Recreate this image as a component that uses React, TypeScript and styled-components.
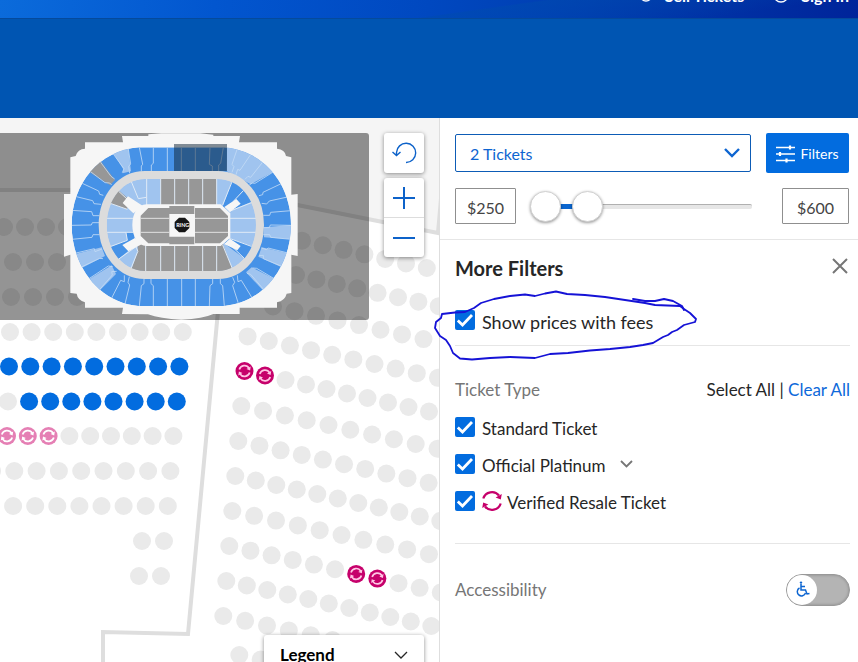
import React, { useState } from "react";
import styled, { createGlobalStyle } from "styled-components";

const GlobalStyle = createGlobalStyle`
  *, *::before, *::after { box-sizing: border-box; }
  body { margin: 0; background: #fff; color: #262626; font-family: Lato, "Open Sans", sans-serif; font-size: 17px; line-height: 20px; }
  button, input, select { font: inherit; color: inherit; }
`;

const Page = styled.div`
  display: flex;
  flex-direction: column;
  height: 100vh;
  overflow: hidden;
`;

const TopBar = styled.header`
  display: flex;
  flex: none;
  justify-content: flex-end;
  gap: 29px;
  height: 19px;
  padding-right: 9px;
  overflow: hidden;
  border-bottom: 1px solid #054a9c;
  background:
    linear-gradient(172deg, transparent 55%, rgba(0, 75, 175, 0.55) 56%, transparent 85%),
    linear-gradient(97deg, #0b6bdb 0%, #0256cf 25%, #0048c0 50%, #003cae 70%, #00249a 100%);
`;

const TopLink = styled.a`
  display: flex;
  align-items: center;
  gap: 12px;
  height: 20px;
  margin-top: -14px;
  color: #fff;
  font-size: 16px;
  font-weight: 700;
  text-decoration: none;
`;

const Banner = styled.div`
  flex: none;
  height: 99px;
  background: #0055b2;
`;

const Main = styled.main`
  display: grid;
  flex: 1;
  grid-template-columns: minmax(0, 1fr) 419px;
  min-height: 0;
`;

const MapArea = styled.section`
  position: relative;
  overflow: hidden;
`;

const MapDrawing = styled.svg`
  display: block;
`;

const MapControls = styled.div`
  position: absolute;
  top: 15px;
  right: 15px;
  display: flex;
  flex-direction: column;
  gap: 5px;
  width: 40px;
`;

const ControlGroup = styled.div`
  overflow: hidden;
  border-radius: 3px;
  background: #fff;
  box-shadow: 0 1px 4px rgba(0, 0, 0, 0.45);
`;

const ControlButton = styled.button<{ $height?: number }>`
  display: grid;
  place-items: center;
  width: 100%;
  height: ${(p) => p.$height ?? 40}px;
  padding: 0;
  border: 0;
  background: none;
  color: #0d62c9;
  cursor: pointer;

  & + & { border-top: 1px solid #ddd; }
`;

const Legend = styled.button`
  position: absolute;
  right: 15px;
  bottom: -13px;
  display: flex;
  align-items: center;
  justify-content: space-between;
  width: 160px;
  height: 40px;
  padding: 0 16px;
  border: 0;
  border-radius: 3px;
  background: #fff;
  box-shadow: 0 1px 4px rgba(0, 0, 0, 0.45);
  color: #000;
  font-weight: 700;
`;

const Panel = styled.aside`
  border-left: 1px solid #dedede;
  background: #fff;
`;

const FilterBar = styled.div`
  display: grid;
  gap: 15px;
  padding: 15px 9px 15px 15px;
  border-bottom: 1px solid #e6e6e6;
`;

const Row = styled.div<{ $gap: number }>`
  display: flex;
  align-items: center;
  gap: ${(p) => p.$gap}px;
`;

const SelectBox = styled.div`
  position: relative;
  flex: 1;
  color: #0d65d1;

  svg {
    position: absolute;
    top: 14px;
    right: 11px;
    pointer-events: none;
  }
`;

const TicketSelect = styled.select`
  display: block;
  width: 100%;
  height: 38px;
  padding: 2px 14px 0;
  border: 1px solid #0d5cb6;
  border-radius: 2px;
  background: #fff;
  font-size: 16px;
  appearance: none;
`;

const FiltersButton = styled.button`
  display: flex;
  align-items: center;
  justify-content: center;
  gap: 5px;
  width: 83px;
  height: 40px;
  padding: 2px 0 0;
  border: 0;
  border-radius: 2px;
  background: #026cdf;
  color: #fff;
  font-size: 14px;
`;

const PriceInput = styled.input<{ $width: number }>`
  width: ${(p) => p.$width}px;
  height: 36px;
  padding: 2px 0 0;
  border: 1px solid #8f8f8f;
  border-radius: 1px;
  color: #444;
  font-size: 16px;
  text-align: center;
`;

const Slider = styled.div`
  position: relative;
  flex: 1;
  height: 36px;
  margin-right: 16px;
`;

const SliderTrack = styled.div`
  position: absolute;
  top: 16px;
  right: 0;
  left: 0;
  height: 5px;
  border-top: 1px solid #b0b0b0;
  border-radius: 2px;
  background: #e6e6e6;
`;

const SliderFill = styled.div`
  position: absolute;
  top: 16px;
  left: 15px;
  height: 5px;
  background: #0a66cf;
`;

const Range = styled.input`
  position: absolute;
  inset: 0;
  width: 100%;
  height: 36px;
  margin: 0;
  background: none;
  appearance: none;
  pointer-events: none;

  &::-webkit-slider-thumb {
    width: 31px;
    height: 31px;
    border: 1px solid #d2d2d2;
    border-radius: 50%;
    background: #fff;
    box-shadow: 0 1px 3px rgba(0, 0, 0, 0.4);
    appearance: none;
    pointer-events: auto;
  }
`;

const PanelBody = styled.div`
  padding: 0 8px 0 15px;
`;

const PanelHead = styled.div`
  display: flex;
  align-items: center;
  justify-content: space-between;
  height: 58px;
  padding-bottom: 3px;
`;

const Title = styled.h2`
  margin: 0;
  font-size: 20px;
  line-height: 24px;
`;

const CloseButton = styled.button`
  display: grid;
  width: 20px;
  height: 20px;
  padding: 0 0 6px;
  border: 0;
  background: none;
  color: #767676;
  place-items: center;
`;

const FeesGroup = styled.div`
  position: relative;
  height: 48px;
  padding-top: 12px;
  border-bottom: 1px solid #e6e6e6;
  font-size: 18px;
`;

const InkMark = styled.svg`
  position: absolute;
  top: -10px;
  left: -25px;
  overflow: visible;
  pointer-events: none;
`;

const TypeGroup = styled.section`
  display: grid;
  gap: 17px;
  padding: 34px 0 32px;
  border-bottom: 1px solid #e6e6e6;
`;

const GroupHead = styled.div`
  display: flex;
  align-items: center;
  justify-content: space-between;
`;

const GroupTitle = styled.h3`
  margin: 0;
  color: #767676;
  font-size: 17px;
  font-weight: 400;
`;

const TextLink = styled.a<{ $active?: boolean }>`
  color: ${(p) => (p.$active ? "#0d69da" : "#262626")};
  text-decoration: none;
`;

const CheckLabel = styled.label<{ $gap: number }>`
  display: flex;
  align-items: center;
  gap: 7px;
  height: 20px;

  span { padding-top: 4px; margin-left: ${(p) => p.$gap - 7}px; }
`;

const CheckBox = styled.input`
  width: 20px;
  height: 20px;
  margin: 0;
  border-radius: 2px;
  background: #026cdf;
  appearance: none;

  &:not(:checked) { border: 1px solid #8f8f8f; background: #fff; }
`;

const CheckHolder = styled.div`
  position: relative;
  display: flex;

  svg { position: absolute; inset: 0; pointer-events: none; }
`;

const AccessRow = styled.label`
  display: flex;
  align-items: center;
  justify-content: space-between;
  padding-top: 30px;
  color: #767676;
`;

const Switch = styled.div`
  position: relative;
  display: flex;

  svg { position: absolute; top: 7px; left: 9px; pointer-events: none; }
`;

const SwitchInput = styled.input`
  width: 64px;
  height: 32px;
  margin: 0;
  border: 1px solid #999;
  border-radius: 16px;
  background: #b4b4b4;
  box-shadow: inset 0 0 3px rgba(0, 0, 0, 0.25);
  appearance: none;

  &::before {
    display: block;
    width: 30px;
    height: 30px;
    border-radius: 50%;
    background: #fff;
    content: "";
  }
`;

type SeatRow = { x: number; y: number; dx: number; dy: number; n: number; open?: number[]; resale?: number[]; faded?: number[] };

const span = (from: number, to: number) => Array.from({ length: to - from + 1 }, (_, i) => from + i);

const seatRows: SeatRow[] = [
  { x: 4, y: 227, dx: 21, dy: 0, n: 4 },
  { x: -9, y: 262, dx: 22, dy: 0, n: 4 },
  { x: 11, y: 297, dx: 22, dy: 0, n: 4 },
  { x: 10, y: 332, dx: 21.6, dy: 0, n: 9 },
  { x: 9, y: 366.5, dx: 21.3, dy: 0, n: 9, open: span(0, 8) },
  { x: 8, y: 401.5, dx: 21.1, dy: 0, n: 9, open: span(1, 8) },
  { x: 7, y: 436, dx: 20.8, dy: 0, n: 9, faded: [0, 1, 2] },
  { x: -8, y: 471, dx: 22.3, dy: 0, n: 9 },
  { x: -9, y: 506, dx: 22.1, dy: 0, n: 9 },
  { x: 142, y: 541, dx: 22, dy: 0, n: 2 },
  { x: 139, y: 576, dx: 22, dy: 0, n: 2 },
  { x: 302, y: 240.7, dx: 20.8, dy: 4.55, n: 7 },
  { x: 296, y: 275, dx: 20.4, dy: 4.45, n: 8 },
  { x: 273, y: 306.5, dx: 21.5, dy: 4.65, n: 8 },
  { x: 247.6, y: 336.4, dx: 21.15, dy: 4.6, n: 10 },
  { x: 244.5, y: 371, dx: 20.5, dy: 4.5, n: 10, resale: [0, 1] },
  { x: 241.3, y: 406, dx: 21.8, dy: 4.75, n: 10 },
  { x: 238.3, y: 441, dx: 21.15, dy: 4.65, n: 10 },
  { x: 235.3, y: 476, dx: 20.5, dy: 4.5, n: 11 },
  { x: 232.3, y: 511, dx: 21.85, dy: 4.8, n: 10 },
  { x: 229.3, y: 546, dx: 21.15, dy: 4.65, n: 11, resale: [6, 7] },
  { x: 226.3, y: 581, dx: 20.5, dy: 4.5, n: 11 },
  { x: 223.3, y: 616, dx: 21.85, dy: 4.8, n: 9 },
  { x: 239.3, y: 655, dx: 21.4, dy: 4.6, n: 4 },
];

function Seats() {
  return (
    <g>
      {seatRows.map((row, r) =>
        span(0, row.n - 1).map((i) => {
          const x = row.x + row.dx * i;
          const y = row.y + row.dy * i - 118;
          const faded = row.faded?.includes(i);
          const resale = faded || row.resale?.includes(i);
          const fill = faded ? "#e57fb4" : resale ? "#c6016b" : row.open?.includes(i) ? "#026cdf" : "#eaeaea";
          return (
            <g key={`${r}-${i}`} transform={`translate(${x} ${y})`}>
              <circle r="9" fill={fill} />
              {resale && (
                <g fill="none" stroke={faded ? "#fff" : "#ffc6e4"} strokeWidth="1.7">
                  <path d="M-5.200 -1.500A5.400 5.400 0 0 1 4.600 -2.800M5.200 1.500A5.400 5.400 0 0 1 -4.600 2.800" />
                  <path d="M6.200 -4.500L5.600 -.6L2 -2ZM-6.200 4.500L-5.600 .6L-2 2Z" fill={faded ? "#fff" : "#ffc6e4"} stroke="none" />
                </g>
              )}
            </g>
          );
        })
      )}
    </g>
  );
}

const LIGHT = "#a0c4ef";
const BLUE = "#4692e7";
const GREY = "#979797";

const bowl = "M415 112H673C790 122 873 220 873 345S790 578 673 588H415C298 578 215 470 215 345S298 122 415 112Z";
const inner = "M435 207H653C718 207 768 268 768 345S718 483 653 483H435C370 483 320 422 320 345S370 207 435 207Z";

function Arena() {
  return (
    <g transform="translate(0 -8) scale(.33333)">
      <path
        fill="#f6f6f6"
        d="M192 252H211V142L227 138Q233 117 255 116V97H369L366 78H445V73L484 70H600L640 74V78H720L717 97H831V116Q855 118 858 138L874 142V254L893 252V438L874 434V549L860 551Q855 572 831 577V593H719V612H640Q610 626 544 629Q480 626 444 613L366 612L369 593H255V577Q233 570 230 551L211 549V434L192 440Z"
      />
      <clipPath id="bowl"><path d={bowl} /></clipPath>
      <clipPath id="inner"><path d={inner} /></clipPath>
      <g clipPath="url(#bowl)">
        <path d={bowl} fill={BLUE} />
        <path fill={LIGHT} d="M330 115L383 100L393 184L368 190L370 178ZM215 435L305 412L315 438L238 478ZM262 511L335 466L348 492L295 545ZM681 100H725L770 115L830 180L752 223L680 184ZM792 352L873 345V388L792 382ZM785 412L873 432L850 474L775 440ZM755 472L830 510L793 545L738 487Z" />
        <path fill={GREY} d="M262 182L297 147L345 210L330 225Z" />
        <g fill="none" stroke="#c3dbf5" strokeWidth="2.5">
          <path d="M418 112L428 163L424 168V184M460 112V160L454 165V184M502 112V184M544 112V184M586 112V184M630 112L628 163L637 168V184M670 112L662 160L656 165V184" />
          <path d="M418 588L424 527L432 521V506M460 588V527L453 521V506M502 588V506M545 588V506M586 588V506M628 588L630 527L638 521V506M673 588L668 527L661 521V506" />
          <path d="M383 105L392 162L386 169L389 190M334 124L372 176L367 188M297 150L333 199L344 207M265 180L315 218L329 219L335 225M236 215L296 243L299 253L310 256M221 258L278 272L282 281L303 283M215 301L275 305L279 317H298M215 346L274 345L277 338H298M216 388L276 382L279 374H298M224 430L283 416L285 425L306 417M240 473L299 445L309 446M264 508L325 468L338 470M297 541L337 495L335 485L350 484M334 566L362 511L373 515L373 496M375 582L389 525L384 517L388 500" />
          <path d="M715 107L696 163L702 170L696 187M757 126L720 181L713 178L708 194M793 150L752 202L744 199L735 208M826 182L765 220L757 219L748 225M850 218L789 247L788 254L777 257M867 260L808 273L800 282L785 280M873 302L812 307L809 316H790M873 346L811 345L808 353H790M873 388L812 382L809 374H790M868 430L804 414L800 419L784 414M850 471L790 446L790 436L777 437M826 508L770 475L758 474M793 541L752 493L741 490M757 565L724 511L714 515L712 496M715 580L698 527L704 517L698 502" />
        </g>
      </g>
      <path d={inner} fill={LIGHT} stroke="#dcdcdc" strokeWidth="48" />
      <g clipPath="url(#inner)">
        <path d={inner} fill={LIGHT} />
        <path fill={GREY} d="M482 200H650V290H482ZM355 240L395 275L380 298L325 278ZM413 400H668L702 490H390L413 425Z" />
        <path fill={BLUE} d="M697 210L760 258L755 275L690 302L668 290ZM325 413L382 390L378 367H405L400 410L352 450ZM688 385L765 412L737 448L672 400Z" />
        <g fill="none" stroke="#dfeaf6" strokeWidth="3">
          <path d="M394 215L415 266L439 262M440 205V285M482 205V285M524 205V285M566 205V285M608 205V285M650 205V285M697 213L668 285M732 240L700 274" />
          <path d="M437 405V486M482 405V486M524 405V486M566 405V486M608 405V486M650 405V486M668 405L698 478M413 425L392 478M355 243L395 280M325 278L382 298M318 325H400M318 367H400M325 412L382 391L378 368M355 448L408 410L414 425M688 304L762 275M688 325H770M688 367H770M688 385L762 412M688 402L736 448" />
        </g>
        <path fill="#f6f6f6" d="M384 259L430 289L400 310L368 279ZM367 405L405 384L425 403L385 424ZM673 291L709 267L722 281L690 306ZM690 386L722 408L712 421L672 402Z" />
      </g>
      <path d="M440 283H662L691 310V384L662 408H440C412 408 397 378 397 345S412 283 440 283Z" fill="#f6f6f6" />
      <path fill={GREY} d="M445 294H508V400H445L422 378V317ZM585 294H660L684 318V378L660 400H585ZM508 288H583V312H508ZM508 380H583V403H508Z" />
      <path fill="none" stroke="#e2e2e2" strokeWidth="3" d="M422 325H508M422 367H508M585 325H684M585 367H684" />
      <path fill="#161616" d="M537 323H555L568 336V354L555 367H537L524 354V336Z" />
      <text x="548" y="351" fill="#fff" fontSize="16" fontWeight="700" textAnchor="middle">RING</text>
      <rect x="522" y="102" width="159" height="81" fill="#14283c" fillOpacity=".52" />
    </g>
  );
}

const VenueMap = () => (
  <MapDrawing width="858" height="544" viewBox="0 0 858 544" role="img" aria-label="Seat map">
    <rect width="858" height="544" fill="#fff" />
    <path d="M0 0H858V116H439L298 87L218 72H0Z" fill="#f5f5f5" />
    <g fill="none" stroke="#dedede" strokeWidth="4">
      <path d="M0 72H222L438 115L448 0" />
      <path d="M222 150L188 516L103 514V544" />
    </g>
    <Seats />
    <path d="M0 15H366Q369 15 369 18V199Q369 202 366 202H0Z" fillOpacity=".42" />
    <Arena />
  </MapDrawing>
);

const Chevron = ({ w, stroke, color }: { w: number; stroke: number; color: string }) => (
  <svg width={w} height={w / 2 + 2} viewBox={`0 0 ${w} ${w / 2 + 2}`} fill="none" stroke={color} strokeWidth={stroke} aria-hidden="true">
    <path d={`M1 1L${w / 2} ${w / 2}L${w - 1} 1`} />
  </svg>
);

const ResaleIcon = () => (
  <svg width="20" height="20" viewBox="0 0 20 20" aria-hidden="true">
    <g fill="none" stroke="#c6016b" strokeWidth="2.2">
      <path d="M1.300 7.500A9 8.800 0 0 1 17 4.500M18.700 12.500A9 8.800 0 0 1 3 15.500" />
    </g>
    <path d="M19.800 3L18.800 8.600L13.600 6.400ZM.2 17L1.200 11.400L6.400 13.600Z" fill="#c6016b" />
  </svg>
);

function Check({ label, icon }: { label: string; icon?: React.ReactNode }) {
  const [on, setOn] = useState(true);
  return (
    <CheckLabel $gap={icon ? 5 : 7}>
      <CheckHolder>
        <CheckBox type="checkbox" checked={on} onChange={() => setOn(!on)} />
        {on && (
          <svg width="20" height="20" viewBox="0 0 20 20" fill="none" stroke="#fff" strokeWidth="2.8" aria-hidden="true">
            <path d="M2.8 10.5L7.5 15L17 5" />
          </svg>
        )}
      </CheckHolder>
      {icon}
      <span>{label}</span>
    </CheckLabel>
  );
}

export default function App() {
  const [low, setLow] = useState(0);
  const [high, setHigh] = useState(22);
  return (
    <Page>
      <GlobalStyle />
      <TopBar>
        <TopLink href="#sell">
          <svg width="14" height="14" viewBox="0 0 14 14" fill="none" stroke="#fff" strokeWidth="1.3"><circle cx="7" cy="6" r="6" /></svg>
          Sell Tickets
        </TopLink>
        <TopLink href="#signin">
          <svg width="16" height="16" viewBox="0 0 16 16" fill="none" stroke="#fff" strokeWidth="1.3"><circle cx="8" cy="7" r="7" /></svg>
          Sign In
        </TopLink>
      </TopBar>
      <Banner />
      <Main>
        <MapArea>
          <VenueMap />
          <MapControls>
            <ControlGroup>
              <ControlButton aria-label="Reset map">
                <svg width="26" height="24" viewBox="0 0 26 24" fill="none" stroke="currentColor" strokeWidth="1.4">
                  <path d="M5.500 14.500V11.500A9.600 9.600 0 1 1 15 21.500M1.500 11L5.500 14.500L9.500 11" />
                </svg>
              </ControlButton>
            </ControlGroup>
            <ControlGroup>
              <ControlButton $height={39} aria-label="Zoom in">
                <svg width="22" height="22" viewBox="0 0 22 22" stroke="currentColor" strokeWidth="2"><path d="M0 11H22M11 0V22" /></svg>
              </ControlButton>
              <ControlButton aria-label="Zoom out">
                <svg width="22" height="22" viewBox="0 0 22 22" stroke="currentColor" strokeWidth="2"><path d="M0 11H22" /></svg>
              </ControlButton>
            </ControlGroup>
          </MapControls>
          <Legend>
            Legend
            <Chevron w={14} stroke={1.3} color="#262626" />
          </Legend>
        </MapArea>
        <Panel>
          <FilterBar>
            <Row $gap={15}>
              <SelectBox>
                <TicketSelect aria-label="Number of tickets" defaultValue="2">
                  <option value="1">1 Ticket</option>
                  <option value="2">2 Tickets</option>
                </TicketSelect>
                <Chevron w={16} stroke={2.4} color="#0d65d1" />
              </SelectBox>
              <FiltersButton>
                <svg width="19" height="18" viewBox="0 0 19 18" fill="none" stroke="#fff" strokeWidth="1.4" aria-hidden="true">
                  <path d="M0 2.500H19M0 9H19M0 15.500H19" />
                  <path d="M14 .5V4.500M4 7V11M10.500 13.500V17.500" strokeWidth="2.2" />
                </svg>
                Filters
              </FiltersButton>
            </Row>
            <Row $gap={14}>
              <PriceInput $width={61} aria-label="Minimum price" defaultValue="$250" />
              <Slider>
                <SliderTrack />
                <SliderFill style={{ width: `${high}%` }} />
                <Range type="range" aria-label="Lowest price" value={low} onChange={(e) => setLow(Math.min(+e.target.value, high))} />
                <Range type="range" aria-label="Highest price" value={high} onChange={(e) => setHigh(Math.max(+e.target.value, low))} />
              </Slider>
              <PriceInput $width={67} aria-label="Maximum price" defaultValue="$600" />
            </Row>
          </FilterBar>
          <PanelBody>
            <PanelHead>
              <Title>More Filters</Title>
              <CloseButton aria-label="Close">
                <svg width="16" height="16" viewBox="0 0 16 16" stroke="currentColor" strokeWidth="2"><path d="M1 1L15 15M15 1L1 15" /></svg>
              </CloseButton>
            </PanelHead>
            <FeesGroup>
              <Check label="Show prices with fees" />
              <InkMark width="270" height="76" viewBox="430 288 270 76" fill="none" stroke="#1512d6" strokeWidth="1.8" strokeLinecap="round" strokeLinejoin="round">
                <path d="M442 314L455 312.500L465 312L474 308L481 303L494 299L510 296L525 294.500L535 296L545 293.500L556 291.500L567 294L585 295L605 297L625 300L645 303L655 305L680 306L684 309L690 313L696 319L695 322L684 325L677 330L672 332L668 335L663 337L653 343L643 345L630 347L610 349L590 350.500L568 353L550 354L535 358L510 357L490 358L472 359.500L460 358.500L453 353L450 346L446 340L440 336L435 328L436 322L441 318L442 314" />
                <path d="M633 299L645 301L655 301L664 299L673 301L682 306L684 310" />
              </InkMark>
            </FeesGroup>
            <TypeGroup>
              <GroupHead>
                <GroupTitle>Ticket Type</GroupTitle>
                <div>
                  <TextLink href="#all">Select All</TextLink> | <TextLink href="#none" $active>Clear All</TextLink>
                </div>
              </GroupHead>
              <Check label="Standard Ticket" />
              <Row $gap={14}>
                <Check label="Official Platinum" />
                <Chevron w={13} stroke={1.8} color="#767676" />
              </Row>
              <Check label="Verified Resale Ticket" icon={<ResaleIcon />} />
            </TypeGroup>
            <AccessRow>
              Accessibility
              <Switch>
                <SwitchInput type="checkbox" role="switch" />
                <svg width="16" height="16" viewBox="0 0 16 16" fill="none" stroke="#0d65d1" strokeWidth="1.5" aria-hidden="true">
                  <circle cx="6" cy="1.600" r="1.200" fill="#0d65d1" stroke="none" />
                  <path d="M6 3V9H10.500L12 13L14.500 12.500M6 5.500H10M4.500 7A4.200 4.200 0 1 0 10.500 12" />
                </svg>
              </Switch>
            </AccessRow>
          </PanelBody>
        </Panel>
      </Main>
    </Page>
  );
}
